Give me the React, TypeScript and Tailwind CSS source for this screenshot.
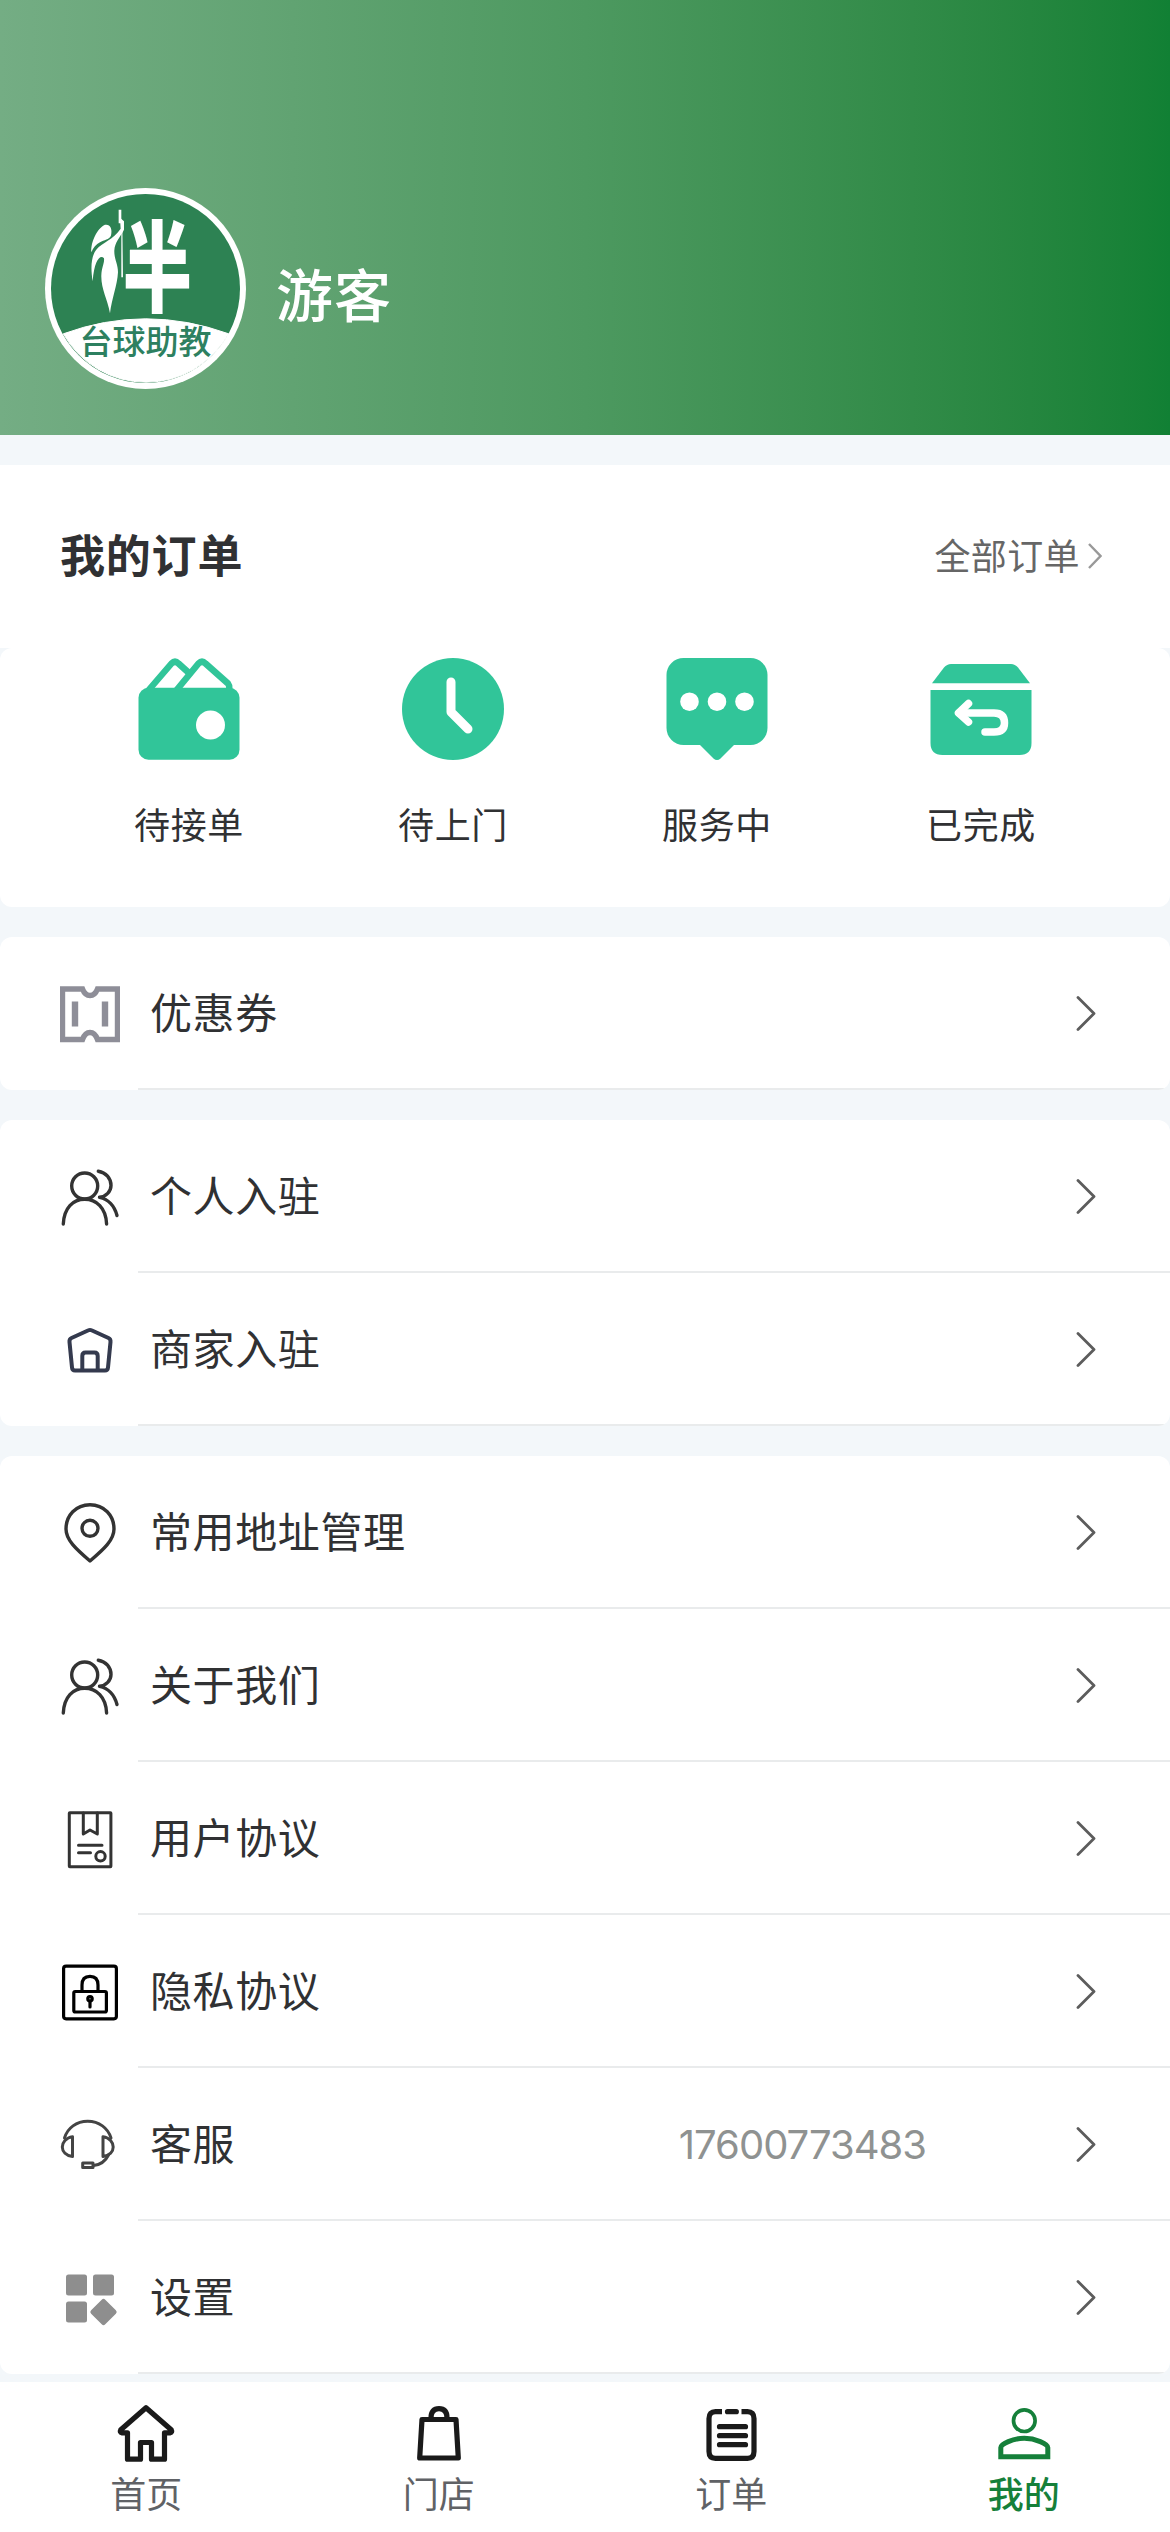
import type { ReactNode } from 'react';

const FONT = "font-['Inter','Noto_Sans_CJK_SC',sans-serif]";

type IconProps = { children: ReactNode; className?: string };

// 60x60 line icon used by the list rows and the tab bar
function LineIcon({ children, className = 'text-[#333]' }: IconProps) {
  return (
    <svg
      viewBox="0 0 60 60"
      fill="none"
      stroke="currentColor"
      strokeWidth="3.4"
      strokeLinecap="round"
      strokeLinejoin="round"
      className={`size-[60px] shrink-0 ${className}`}
    >
      {children}
    </svg>
  );
}

function OrderIcon({ children }: { children: ReactNode }) {
  return (
    <svg viewBox="0 0 102 102" className="size-[102px] text-[#31c599]" fill="currentColor">
      {children}
    </svg>
  );
}

const usersIcon = (
  <LineIcon>
    <circle cx="24.7" cy="19" r="13" />
    <path d="M3.3 57C4 41 13 32.3 24.7 32.3S46 41 46.6 57" />
    <path d="M38.3 4.2C46 5.5 51 11.5 51 18.5C51 24.5 46 29.5 39.5 30.3C48 32 54.5 39 57 48.5" />
  </LineIcon>
);

const orderItems = [
  {
    label: '待接单',
    icon: (
      <OrderIcon>
        <g fill="none" stroke="currentColor" strokeWidth="6.5" strokeLinejoin="round">
          <path d="M9 34L33.5 5.5Q37 2 40.5 5.5L51 15" />
          <path d="M37 34L60.5 5.5Q64 2 67.5 5.5L90 25.5Q92 28 91 34" />
        </g>
        <rect x="0.5" y="29.7" width="101" height="72" rx="10" />
        <circle cx="72.5" cy="67" r="14.5" fill="#fff" />
      </OrderIcon>
    ),
  },
  {
    label: '待上门',
    icon: (
      <OrderIcon>
        <circle cx="51" cy="51" r="51" />
        <path
          d="M49 24V54L66 71"
          fill="none"
          stroke="#fff"
          strokeWidth="9"
          strokeLinecap="round"
          strokeLinejoin="round"
        />
      </OrderIcon>
    ),
  },
  {
    label: '服务中',
    icon: (
      <OrderIcon>
        <rect x="0.5" y="0" width="101" height="87" rx="17" />
        <path d="M33 86L47.5 100.5Q51 103.5 54.5 100.5L69 86Z" />
        <g fill="#fff">
          <circle cx="23.5" cy="43.7" r="9.3" />
          <circle cx="51" cy="43.7" r="9.3" />
          <circle cx="78.5" cy="43.7" r="9.3" />
        </g>
      </OrderIcon>
    ),
  },
  {
    label: '已完成',
    icon: (
      <OrderIcon>
        <path d="M2 25.3L14 9.5Q17 6 21 6H81Q85 6 88 9.5L100 25.3Z" />
        <path d="M0.5 32H101.5V85Q101.5 97 89.5 97H12.5Q0.5 97 0.5 85Z" />
        <g fill="none" stroke="#fff" strokeWidth="7.5" strokeLinecap="round" strokeLinejoin="round">
          <path d="M38.5 45.5L28.5 55L38.5 64" />
          <path d="M29 55H64Q74.5 55 74.5 65Q74.5 74 64 74H55" />
        </g>
      </OrderIcon>
    ),
  },
];

const menuGroups: { label: string; value?: string; icon: ReactNode }[][] = [
  [
    {
      label: '优惠券',
      icon: (
        <LineIcon className="text-[#8e8e98]">
          <path
            d="M2.5 5H22.5Q25 11.5 30 11.5Q35 11.5 37.5 5H57.5V55.5H37.5Q35 48.5 30 48.5Q25 48.5 22.5 55.5H2.5Z"
            strokeWidth="5.4"
            strokeLinejoin="miter"
          />
          <path d="M15 17.5V42.5M45 17.5V42.5" strokeWidth="6.4" strokeLinecap="butt" />
        </LineIcon>
      ),
    },
  ],
  [
    { label: '个人入驻', icon: usersIcon },
    {
      label: '商家入驻',
      icon: (
        <LineIcon className="text-[#343a4e]">
          <g strokeWidth="4">
            <path d="M28.5 10.3Q30 9.5 31.5 10.3L48.5 18Q50.8 19 50.5 22L48 47.5Q47.7 50.5 45 50.5H15Q12.3 50.5 12 47.5L9.5 22Q9.2 19 11.5 18Z" />
            <path d="M22.3 50V36Q22.3 32.5 25.5 32.5H34.5Q37.7 32.5 37.7 36V50" />
          </g>
        </LineIcon>
      ),
    },
  ],
  [
    {
      label: '常用地址管理',
      icon: (
        <LineIcon>
          <path d="M30 1.7C44 1.7 54 12.5 54 26C54 37 44 46 30 58C16 46 6 37 6 26C6 12.5 16 1.7 30 1.7Z" />
          <circle cx="30" cy="25.3" r="8" />
        </LineIcon>
      ),
    },
    { label: '关于我们', icon: usersIcon },
    {
      label: '用户协议',
      icon: (
        <LineIcon>
          <g strokeWidth="3">
            <rect x="9.3" y="3.8" width="41.6" height="54" rx="0.5" />
            <path d="M23.3 4V25L30 21L37.3 25V4" />
            <path d="M18.5 36.3H42M18.5 43.7H30.5" />
            <circle cx="40.5" cy="47.3" r="4.7" />
          </g>
        </LineIcon>
      ),
    },
    {
      label: '隐私协议',
      icon: (
        <LineIcon className="text-black">
          <g strokeWidth="3.2">
            <rect x="3.6" y="4.2" width="52.8" height="52.6" rx="2.5" />
            <rect x="13.8" y="29.5" width="32.6" height="20.5" rx="1.5" />
            <path d="M22 29.5V23Q22 14.3 30 14.3T38 23V29.5" />
            <circle cx="30" cy="36.8" r="2.2" />
            <path d="M30 39V45" />
          </g>
        </LineIcon>
      ),
    },
    {
      label: '客服',
      value: '17600773483',
      icon: (
        <LineIcon className="text-[#444]">
          <g strokeWidth="3">
            <path d="M4.5 23C7.5 13 16.5 6.3 27.7 6.3S48 13 51 23" />
            <path d="M12.5 21.7V41.5C6 40.5 2.3 36.5 2.3 32S6 22.5 12.5 21.7Z" />
            <path d="M43 21.7V41.5C49.7 40.5 53.2 36.5 53.2 32S49.7 22.5 43 21.7Z" />
            <path d="M48.5 40C45.5 46 41 49.8 33.5 50.5" />
            <rect x="22.7" y="48" width="10.3" height="4.6" />
          </g>
        </LineIcon>
      ),
    },
    {
      label: '设置',
      icon: (
        <LineIcon className="text-[#8e8e8e]">
          <g fill="currentColor" stroke="none">
            <rect x="6" y="6.5" width="21" height="21" rx="2.5" />
            <rect x="33" y="6.5" width="21" height="21" rx="2.5" />
            <rect x="6" y="33.5" width="21" height="21" rx="2.5" />
            <rect x="33.5" y="34" width="20" height="20" rx="2.5" transform="rotate(45 43.5 44)" />
          </g>
        </LineIcon>
      ),
    },
  ],
];

const tabs = [
  {
    label: '首页',
    icon: (
      <LineIcon className="text-[#1a1a1a]">
        <path
          d="M30 3.8L4.8 25.8Q3.4 28.5 6 28.8H11.5V55.2H24.5V38.5H35.5V55.2H48.5V28.8H54Q56.6 28.5 55.2 25.8Z"
          strokeWidth="5.2"
        />
      </LineIcon>
    ),
  },
  {
    label: '门店',
    icon: (
      <LineIcon className="text-[#1a1a1a]">
        <g strokeWidth="5.2">
          <path d="M13 15.5H47L49.3 54H10.7Z" />
          <path d="M22 14Q22 4.7 30 4.7T38 14" />
        </g>
      </LineIcon>
    ),
  },
  {
    label: '订单',
    icon: (
      <LineIcon className="text-[#1a1a1a]">
        <g strokeWidth="5.2">
          <path
            d="M21 7.7H14.5Q8 7.7 8 14.5V47.5Q8 54.3 14.5 54.3H46.5Q53 54.3 53 47.5V14.5Q53 7.7 46.5 7.7H40.5"
            strokeLinecap="butt"
          />
          <path d="M26.5 7.7H35.3" />
          <path d="M18.5 22.7H44.5M18.5 31.7H44.5M18.5 40.7H44.5" />
        </g>
      </LineIcon>
    ),
  },
  {
    label: '我的',
    active: true,
    icon: (
      <LineIcon className="text-[#15803a]">
        <circle cx="30.3" cy="16.7" r="10.8" strokeWidth="3.7" />
        <path
          d="M6.8 52.7V43.5C6.8 40 19 34.3 30.3 34.3S53.8 40 53.8 43.5V52.7Z"
          strokeWidth="5"
          strokeLinejoin="miter"
        />
      </LineIcon>
    ),
  },
];

function Avatar() {
  return (
    <svg viewBox="0 0 201 201" className="size-[201px] shrink-0">
      <circle cx="100.5" cy="100.5" r="100.5" fill="#fff" />
      <circle cx="100.5" cy="100.5" r="94.5" fill="#2d8253" />
      <path d="M18.3 145.8Q100.5 115.8 183.7 145.8A94.8 94.8 0 0 1 18.3 145.8Z" fill="#fff" stroke="#fff" />
      <g fill="#fff" transform="translate(-45 -27.5) scale(0.3333)">
        <path d="M274 275C272 245 292 203 315 193C330 190 338 205 333 225C328 238 312 238 300 245C288 252 280 260 274 275Z" />
        <path d="M360 172L372 182V208C358 235 345 245 343 270C342 295 354 310 354 335C352 375 335 415 330 458C322 415 303 385 304 345C305 320 314 308 312 293C300 281 283 300 278 362C271 320 274 285 290 266C305 248 340 238 362 205Z" />
        <path d="M356 148H364V188H356ZM364 190H367L369 350H364Z" />
      </g>
      <text
        transform="translate(112.5 0) scale(0.7 1)"
        y="116.5"
        fontSize="99"
        fontWeight="800"
        fill="#fff"
        textAnchor="middle"
      >
        半
      </text>
      <text x="100.5" y="166" fontSize="33" fontWeight="500" fill="#2d8060" textAnchor="middle">
        台球助教
      </text>
    </svg>
  );
}

export default function App() {
  return (
    <div className={`flex h-[2532px] w-[1170px] flex-col overflow-hidden bg-[#f3f7fa] text-[#303133] ${FONT}`}>
      <header className="flex h-[435px] shrink-0 items-end bg-linear-to-r from-[#74ad84] via-[#4d9960] to-[#118034] pb-[46px] pl-[45px]">
        <Avatar />
        <h1 className="mb-[50px] ml-[30px] text-[57px] leading-[84px] font-medium tracking-[1px] text-white">游客</h1>
      </header>

      {/* My orders */}
      <section className="mt-[30px] shrink-0">
        <div className="flex h-[183px] items-center justify-between bg-white pr-[68px] pl-[60px]">
          <h2 className="text-[45px] font-bold tracking-[0.8px]">我的订单</h2>
          <a className="flex items-center text-[36px] tracking-[0.4px] text-[#666]">
            全部订单
            <svg viewBox="0 0 22 36" className="h-[36px] w-[22px]" fill="none" stroke="#999" strokeWidth="2.4">
              <path d="M9 5L20.5 17L9 29" />
            </svg>
          </a>
        </div>
        <div className="grid h-[259px] grid-cols-4 rounded-[12px] bg-white px-[57px] pt-[10px]">
          {orderItems.map((item) => (
            <div key={item.label} className="flex flex-col items-center">
              {item.icon}
              <span className="mt-[39px] text-[36px] leading-[54px] tracking-[0.6px]">{item.label}</span>
            </div>
          ))}
        </div>
      </section>

      {menuGroups.map((group) => (
        <section key={group[0].label} className="mt-[30px] shrink-0 overflow-hidden rounded-[12px] bg-white">
          {group.map((row) => (
            <div key={row.label} className="flex h-[153px] pl-[60px]">
              <div className="flex w-[78px] items-center">{row.icon}</div>
              <div className="flex flex-1 items-center border-b-2 border-[#e9ebec] pr-[74px] pl-[12px]">
                <span className="flex-1 pt-[2px] text-[42px] tracking-[0.6px]">{row.label}</span>
                {row.value && (
                  <span className="mr-[150px] pt-[2px] text-[40px] tracking-[-1px] text-[#8f9291]">{row.value}</span>
                )}
                <svg
                  viewBox="0 0 20 36"
                  className="h-[36px] w-[20px]"
                  fill="none"
                  stroke="#5c5c5c"
                  strokeWidth="2.8"
                  strokeLinecap="round"
                  strokeLinejoin="round"
                >
                  <path d="M2 2.5L18 18.5L2 34.5" />
                </svg>
              </div>
            </div>
          ))}
        </section>
      ))}

      <nav className="mt-auto grid h-[150px] shrink-0 grid-cols-4 bg-white pt-[22px]">
        {tabs.map((tab) => (
          <a key={tab.label} className="flex flex-col items-center">
            {tab.icon}
            <span
              className={`mt-[4px] text-[36px] leading-[54px] ${tab.active ? 'font-medium text-[#15803a]' : 'text-[#606266]'}`}
            >
              {tab.label}
            </span>
          </a>
        ))}
      </nav>
    </div>
  );
}
